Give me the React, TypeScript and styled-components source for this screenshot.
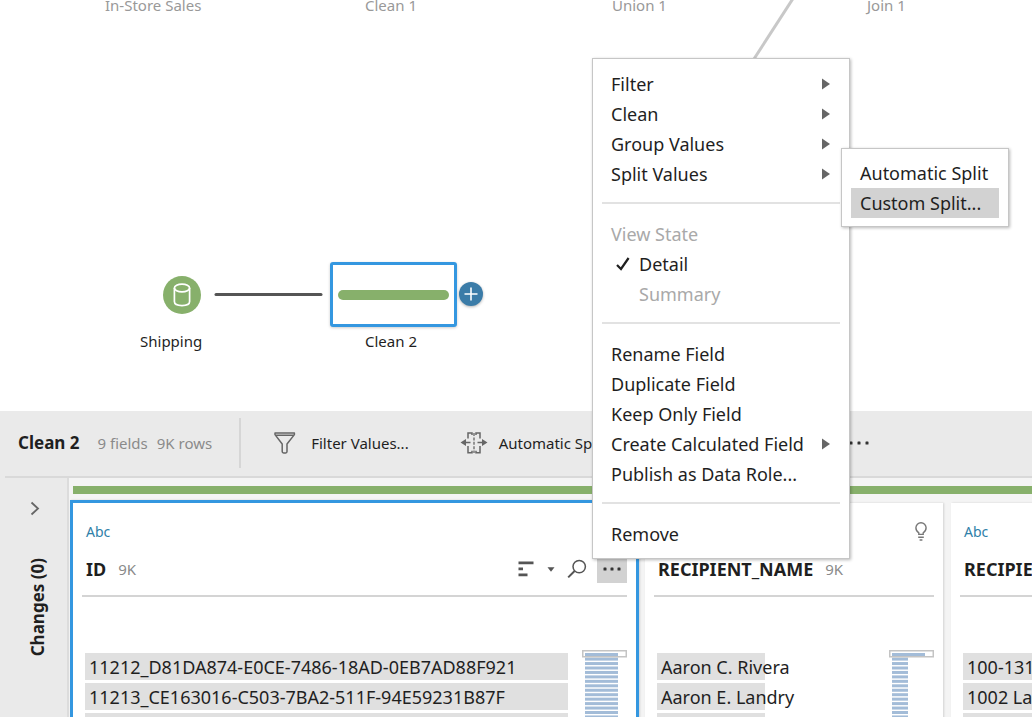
import React from "react";
import styled, { createGlobalStyle, css } from "styled-components";

const ink = "#1f1f1f";
const muted = "#8a8a8a";
const green = "#87b06b";
const accent = "#3497e0";
const link = "#2f7fa8";

const GlobalStyle = createGlobalStyle`
  *, *::before, *::after { box-sizing: border-box; }
  body {
    margin: 0;
    background: #fff;
    color: ${ink};
    font-family: "Noto Sans", "Open Sans", sans-serif;
    font-size: 15px;
    line-height: 20px;
  }
  button {
    border: 0;
    padding: 0;
    margin: 0;
    background: none;
    color: inherit;
    font: inherit;
    text-align: left;
    white-space: nowrap;
  }
  h2, h3, p, ul { margin: 0; padding: 0; font-size: inherit; }
  ul { list-style: none; }
  svg { display: block; flex: none; }
`;

const App = styled.main`
  position: relative;
  display: flex;
  flex-direction: column;
  height: 100vh;
  overflow: hidden;
`;

/* ---- flow canvas ---- */

const Canvas = styled.section`
  position: relative;
  flex: none;
  height: 411px;
  overflow: hidden;
`;

const Connectors = styled.svg`
  position: absolute;
  left: 0;
  top: 0;
`;

const NodeLabel = styled.span<{ $x: number; $y: number; $dim?: boolean }>`
  position: absolute;
  left: ${(p) => p.$x}px;
  top: ${(p) => p.$y}px;
  color: ${(p) => (p.$dim ? "#999" : ink)};
  white-space: nowrap;
`;

const SourceNode = styled.button`
  position: absolute;
  left: 163px;
  top: 276px;
  display: grid;
  place-items: center;
  width: 38px;
  height: 38px;
  border-radius: 50%;
  background: ${green};
`;

const StepNode = styled.button`
  position: absolute;
  left: 330px;
  top: 262px;
  display: flex;
  align-items: center;
  width: 127px;
  height: 65px;
  padding: 0 5px;
  border: 3px solid ${accent};
  border-radius: 3px;
  background: #fff;
  box-shadow: 0 1px 3px rgba(0, 0, 0, 0.2);
`;

const StepBar = styled.span`
  flex: 1;
  height: 10px;
  border-radius: 5px;
  background: ${green};
`;

const AddStep = styled.button`
  position: absolute;
  left: 459px;
  top: 282px;
  display: grid;
  place-items: center;
  width: 24px;
  height: 24px;
  border-radius: 50%;
  background: #3b7ca8;
  box-shadow: 0 1px 3px rgba(0, 0, 0, 0.3);
`;

/* ---- step toolbar ---- */

const Toolbar = styled.header`
  display: flex;
  flex: none;
  align-items: center;
  height: 65px;
  padding: 0 0 2px 18px;
  background: #eaeaea;
`;

const StepName = styled.h2`
  margin-right: 18px;
  font-size: 17px;
  font-weight: 700;
`;

const Count = styled.span`
  margin-right: 9px;
  color: ${muted};
`;

const ToolbarDivider = styled.span`
  width: 2px;
  height: 50px;
  margin: 0 33px 0 18px;
  background: #d6d6d6;
`;

const ToolButton = styled.button`
  display: flex;
  align-items: center;
  gap: 11px;
  margin-right: 51px;
`;

const MoreTools = styled.button`
  margin-left: 204px;
`;

const Rule = styled.div`
  flex: none;
  height: 2px;
  border-left: 5px solid #eaeaea;
  background: #d9d9d9;
`;

/* ---- profile pane ---- */

const Pane = styled.section`
  display: flex;
  flex: 1;
  min-height: 0;
  overflow: hidden;
`;

const ChangesRail = styled.aside`
  display: flex;
  flex: none;
  flex-direction: column;
  align-items: center;
  gap: 42px;
  width: 69px;
  padding: 23px 0 0 3px;
  border-right: 2px solid #dcdcdc;
  background: #eaeaea;
`;

const RailTitle = styled.h2`
  margin-left: 5px;
  font-size: 17px;
  font-weight: 700;
  writing-mode: vertical-rl;
  transform: rotate(180deg);
`;

const Profile = styled.div`
  flex: 1;
  min-width: 0;
  padding-top: 8px;
  background: #f4f4f4;
`;

const StepStripe = styled.div`
  height: 8px;
  margin: 0 0 6px 4px;
  background: ${green};
`;

const Cards = styled.div`
  display: flex;
  align-items: flex-start;
  gap: 8px;
  padding-left: 1px;
`;

const Card = styled.article<{ $width: number; $selected?: boolean }>`
  flex: none;
  width: ${(p) => p.$width}px;
  margin-top: 3px;
  padding: 18px 9px 0;
  background: #fff;
  box-shadow: 1px 0 2px rgba(0, 0, 0, 0.14);
  ${(p) =>
    p.$selected &&
    css`
      margin: 0 -2px 0 0;
      border: 3px solid ${accent};
    `}
`;

const TypeRow = styled.div`
  display: flex;
  align-items: center;
  height: 22px;
  padding: 0 7px 0 4px;
`;

const FieldType = styled.button`
  color: ${link};
  font-size: 14px;
`;

const Hint = styled.button`
  margin-left: auto;
`;

const TitleRow = styled.div`
  display: flex;
  align-items: center;
  height: 54px;
  padding-left: 4px;
  border-bottom: 2px solid #d4d4d4;
`;

const FieldName = styled.h3`
  margin-right: 12px;
  font-size: 18px;
  font-weight: 700;
`;

const FieldTools = styled.div`
  display: flex;
  align-items: center;
  margin-left: auto;
`;

const FieldTool = styled.button<{ $gap?: number; $pressed?: boolean }>`
  margin-left: ${(p) => p.$gap ?? 0}px;
  ${(p) =>
    p.$pressed &&
    css`
      display: grid;
      place-items: center;
      width: 30px;
      height: 28px;
      background: #d2d2d2;
    `}
`;

const CardBody = styled.div`
  display: flex;
  justify-content: space-between;
  padding: 53px 0 0 3px;
`;

const Values = styled.ul<{ $width: number }>`
  display: grid;
  gap: 3px;
  width: ${(p) => p.$width}px;
  padding-top: 3px;
`;

const Value = styled.li<{ $bar: number }>`
  height: 27px;
  padding-left: 4px;
  background: linear-gradient(#e0e0e0, #e0e0e0) no-repeat 0 0 / ${(p) => p.$bar}px 100%;
  font-size: 18px;
  line-height: 29px;
  white-space: nowrap;
`;

/* ---- menus ---- */

const Menu = styled.div<{ $x: number; $y: number; $width: number; $sub?: boolean }>`
  position: absolute;
  left: ${(p) => p.$x}px;
  top: ${(p) => p.$y}px;
  width: ${(p) => p.$width}px;
  padding: ${(p) => (p.$sub ? "9px 9px 8px" : "10px 9px 9px")};
  border: 1px solid #c6c6c6;
  background: #fff;
  box-shadow: 1px 1px 3px rgba(0, 0, 0, 0.28);
`;

const Item = styled.button<{ $active?: boolean; $indent?: boolean }>`
  display: flex;
  align-items: center;
  width: 100%;
  height: 30px;
  padding: 0 9px 0 ${(p) => (p.$indent ? 37 : 9)}px;
  background: ${(p) => (p.$active ? "#d2d2d2" : "none")};
  font-size: 18px;
  &:disabled { color: #a9a9a9; }
  & > svg:last-child { margin-left: auto; }
`;

const Tick = styled.span`
  margin: 0 9px 0 -23px;
`;

const MenuHeading = styled.div`
  height: 30px;
  padding-left: 9px;
  color: #a9a9a9;
  font-size: 18px;
  line-height: 30px;
`;

const Separator = styled.hr`
  height: 2px;
  margin: 13px 0 15px;
  border: 0;
  background: #e2e2e2;
`;

const Arrow = () => (
  <svg width="10" height="12" viewBox="0 0 10 12" aria-hidden="true">
    <path d="M1 0.5 L9 6 L1 11.5Z" fill="#666" />
  </svg>
);

const Dots = ({ gap }: { gap: number }) => (
  <svg width="24" height="6" viewBox="0 0 24 6" aria-hidden="true" fill="#333">
    {[-1, 0, 1].map((i) => (
      <rect key={i} x={10.5 + i * gap} y="1.5" width="3" height="3" rx="0.6" />
    ))}
  </svg>
);

const FilterIcon = () => (
  <svg width="26" height="22" viewBox="0 0 26 22" fill="none" stroke="#666" strokeWidth="1.5" strokeLinejoin="round" aria-hidden="true">
    <path d="M1 1H20.4V2.6L13 12V19.6Q13 21 11.8 21H9.6Q8.2 21 8.2 19.6V12L1 2.6ZM1 3.2H20" />
  </svg>
);

const SplitIcon = () => (
  <svg width="28" height="22" viewBox="0 0 28 22" fill="none" stroke="#666" strokeWidth="1.5" aria-hidden="true">
    <path d="M8 6.5V1H12V3M16 3V1H20V6.5M8 14V20.8H12V18.8M16 18.8V20.8H20V14" />
    <path d="M14 1V21" strokeDasharray="3 1.4" strokeWidth="1.3" />
    <path d="M5 10.5H10.5M17.5 10.5H23" />
    <path d="M0.5 10.5L6 7V14ZM27.5 10.5L22 7V14Z" fill="#666" stroke="none" />
  </svg>
);

const BulbIcon = () => (
  <svg width="12" height="20" viewBox="0 0 12 20" fill="none" stroke="#777" strokeWidth="1.4" aria-hidden="true">
    <path d="M3.8 12.4V10.8Q0.9 9 0.9 5.8A5.1 5.1 0 0 1 11.1 5.8Q11.1 9 8.2 10.8V12.4Z" />
    <path d="M3.2 15.2H8.8M4.6 18H7.4" />
  </svg>
);

const SortIcon = () => (
  <svg width="16" height="16" viewBox="0 0 16 16" fill="#555" aria-hidden="true">
    <path d="M0.5 0.5H15.5V3.3H0.5ZM0.5 6.5H5V9.3H0.5ZM0.5 12.4H9.5V15.2H0.5Z" />
  </svg>
);

const CaretIcon = () => (
  <svg width="8" height="5" viewBox="0 0 8 5" aria-hidden="true">
    <path d="M0.5 0.3H7.5L4 4.7Z" fill="#555" />
  </svg>
);

const SearchIcon = () => (
  <svg width="20" height="20" viewBox="0 0 20 20" fill="none" stroke="#555" strokeWidth="1.5" aria-hidden="true">
    <circle cx="12.2" cy="7.6" r="6.2" />
    <path d="M7.6 12L1.2 18.4" strokeWidth="2" />
  </svg>
);

const Overview = ({ barWidth }: { barWidth: number }) => (
  <svg width="45" height="68" viewBox="0 0 45 68" aria-hidden="true">
    <rect x="3" y="3" width="33" height="3" fill="#a3bcd8" />
    {Array.from({ length: 14 }, (_, i) => (
      <rect key={i} x="3" y={7.6 + i * 4.45} width={barWidth} height="3" fill="#a3bcd8" />
    ))}
    <rect x="0.75" y="0.75" width="43.5" height="6" fill="none" stroke="#c4c4c4" strokeWidth="1.5" />
  </svg>
);

type Field = {
  name: string;
  type?: string;
  count?: string;
  width: number;
  listWidth: number;
  bar: number;
  values: string[];
  selected?: boolean;
  hint?: boolean;
  overview?: number;
};

const fields: Field[] = [
  {
    name: "ID",
    type: "Abc",
    count: "9K",
    width: 569,
    listWidth: 483,
    bar: 483,
    overview: 33,
    selected: true,
    values: [
      "11212_D81DA874-E0CE-7486-18AD-0EB7AD88F921",
      "11213_CE163016-C503-7BA2-511F-94E59231B87F",
      "",
    ],
  },
  {
    name: "RECIPIENT_NAME",
    count: "9K",
    width: 298,
    listWidth: 226,
    bar: 108,
    overview: 16,
    hint: true,
    values: ["Aaron C. Rivera", "Aaron E. Landry", ""],
  },
  {
    name: "RECIPIE",
    type: "Abc",
    width: 298,
    listWidth: 226,
    bar: 108,
    values: ["100-131", "1002 La", ""],
  },
];

const ProfileCard = ({ field }: { field: Field }) => (
  <Card $width={field.width} $selected={field.selected}>
    <TypeRow>
      {field.type && <FieldType>{field.type}</FieldType>}
      {field.hint && (
        <Hint aria-label="Recommendations">
          <BulbIcon />
        </Hint>
      )}
    </TypeRow>
    <TitleRow>
      <FieldName>{field.name}</FieldName>
      {field.count && <Count>{field.count}</Count>}
      {field.selected && (
        <FieldTools>
          <FieldTool aria-label="Sort"><SortIcon /></FieldTool>
          <FieldTool aria-label="Sort options" $gap={13}><CaretIcon /></FieldTool>
          <FieldTool aria-label="Search" $gap={12}><SearchIcon /></FieldTool>
          <FieldTool aria-label="More options" $gap={10} $pressed><Dots gap={7} /></FieldTool>
        </FieldTools>
      )}
    </TitleRow>
    <CardBody>
      <Values $width={field.listWidth}>
        {field.values.map((v, i) => (
          <Value key={i} $bar={field.bar}>{v}</Value>
        ))}
      </Values>
      {field.overview && <Overview barWidth={field.overview} />}
    </CardBody>
  </Card>
);

export default function FlowEditor() {
  return (
    <App>
      <GlobalStyle />
      <Canvas>
        <Connectors width="1032" height="411" aria-hidden="true">
          <path d="M794 -3L752 62" stroke="#c8c8c8" strokeWidth="3" />
          <path d="M216 294.5H321" stroke="#555" strokeWidth="3" strokeLinecap="round" />
        </Connectors>
        <NodeLabel $x={105} $y={-5} $dim>In-Store Sales</NodeLabel>
        <NodeLabel $x={365} $y={-5} $dim>Clean 1</NodeLabel>
        <NodeLabel $x={612} $y={-5} $dim>Union 1</NodeLabel>
        <NodeLabel $x={867} $y={-5} $dim>Join 1</NodeLabel>
        <SourceNode aria-label="Shipping">
          <svg width="18" height="24" viewBox="0 0 18 24" fill="none" stroke="#fff" strokeWidth="1.7" aria-hidden="true">
            <ellipse cx="9" cy="5" rx="7.6" ry="3.8" />
            <path d="M1.4 5V18.6Q1.4 22.6 9 22.6T16.6 18.6V5" />
          </svg>
        </SourceNode>
        <NodeLabel $x={140} $y={331}>Shipping</NodeLabel>
        <StepNode aria-label="Clean 2"><StepBar /></StepNode>
        <NodeLabel $x={365} $y={331}>Clean 2</NodeLabel>
        <AddStep aria-label="Add step">
          <svg width="14" height="14" viewBox="0 0 14 14" stroke="#fff" strokeWidth="1.6" aria-hidden="true">
            <path d="M7 0.5V13.5M0.5 7H13.5" />
          </svg>
        </AddStep>
      </Canvas>

      <Toolbar>
        <StepName>Clean 2</StepName>
        <Count>9 fields</Count>
        <Count>9K rows</Count>
        <ToolbarDivider />
        <ToolButton><FilterIcon />Filter Values...</ToolButton>
        <ToolButton><SplitIcon />Automatic Sp</ToolButton>
        <MoreTools aria-label="More tools"><Dots gap={8} /></MoreTools>
      </Toolbar>
      <Rule />

      <Pane>
        <ChangesRail>
          <button aria-label="Expand changes">
            <svg width="10" height="15" viewBox="0 0 10 15" fill="none" stroke="#666" strokeWidth="1.8" aria-hidden="true">
              <path d="M1.5 1.5L8 7.5L1.5 13.5" />
            </svg>
          </button>
          <RailTitle>Changes (0)</RailTitle>
        </ChangesRail>
        <Profile>
          <StepStripe />
          <Cards>
            {fields.map((f) => <ProfileCard key={f.name} field={f} />)}
          </Cards>
        </Profile>
      </Pane>

      <Menu role="menu" $x={592} $y={58} $width={258}>
        <Item role="menuitem">Filter<Arrow /></Item>
        <Item role="menuitem">Clean<Arrow /></Item>
        <Item role="menuitem">Group Values<Arrow /></Item>
        <Item role="menuitem">Split Values<Arrow /></Item>
        <Separator />
        <MenuHeading>View State</MenuHeading>
        <Item role="menuitemradio" aria-checked="true" $indent>
          <Tick>
            <svg width="14" height="14" viewBox="0 0 14 14" fill="none" stroke={ink} strokeWidth="2.2" aria-hidden="true">
              <path d="M1 8L5 12L12.6 1" />
            </svg>
          </Tick>
          Detail
        </Item>
        <Item role="menuitemradio" aria-checked="false" $indent disabled>Summary</Item>
        <Separator />
        <Item role="menuitem">Rename Field</Item>
        <Item role="menuitem">Duplicate Field</Item>
        <Item role="menuitem">Keep Only Field</Item>
        <Item role="menuitem">Create Calculated Field<Arrow /></Item>
        <Item role="menuitem">Publish as Data Role...</Item>
        <Separator />
        <Item role="menuitem">Remove</Item>
      </Menu>

      <Menu role="menu" $x={841} $y={148} $width={168} $sub>
        <Item role="menuitem">Automatic Split</Item>
        <Item role="menuitem" $active>Custom Split...</Item>
      </Menu>
    </App>
  );
}
